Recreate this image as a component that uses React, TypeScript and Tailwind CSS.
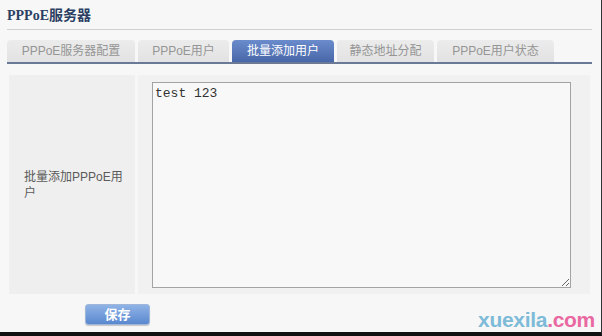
const tabs = ['PPPoE服务器配置', 'PPPoE用户', '批量添加用户', '静态地址分配', 'PPPoE用户状态']
const tabWidths = ['w-[128px]', 'w-[91px]', 'w-[102px]', 'w-[97px]', 'w-[117px]']

export default function App() {
  return (
    <div className="relative w-[602px] h-[336px] bg-[#f7f7f7] border-r border-[#333] border-b-[4px] border-b-[#111] overflow-hidden font-['Liberation_Sans','Noto_Sans_CJK_SC',sans-serif]">
      {/* Header */}
      <div className="pl-[7px] pt-[7px] h-[29px] text-[14px] leading-[17px] font-bold text-[#2b3f63] font-['Liberation_Serif','Noto_Sans_CJK_SC',serif]">
        PPPoE服务器
      </div>
      <div className="ml-[7px] w-[585px] h-px bg-[#cfcfcf]" />

      {/* Tabs */}
      <div className="ml-[7px] w-[585px] mt-[10px] flex items-end gap-[3px] border-b-[2px] border-[#6b7896]">
        {tabs.map((t, i) => (
          <div
            key={t}
            className={`${tabWidths[i]} ${i === 2 ? 'h-[22px] bg-gradient-to-b from-[#6b8ccc] to-[#4867a8] text-white' : 'h-[22px] bg-gradient-to-b from-[#ececec] to-[#e2e2e2] text-[#959595]'} rounded-t-[4px] flex items-center justify-center text-[12px]`}
          >
            {t}
          </div>
        ))}
      </div>

      {/* Form panel */}
      <div className="ml-[9px] mt-[11px] w-[581px] h-[219px] flex gap-[3px]">
        <div className="w-[126px] bg-[#efefef] flex items-center pl-[15px] pr-[10px] text-[12px] leading-[16px] text-[#5a5a5a]">
          批量添加PPPoE用户
        </div>
        <div className="flex-1 bg-[#f1f1f1] pl-[14px] pt-[7px]">
          <textarea
            defaultValue="test 123"
            className="block w-[419px] h-[206px] bg-[#f8f8f8] border border-[#a3a3a3] px-[2px] py-[3px] text-[13px] leading-[15px] text-[#333] font-['Liberation_Mono',monospace] outline-none resize"
          />
        </div>
      </div>

      {/* Save */}
      <div className="ml-[85px] mt-[10px] w-[65px] h-[21px] rounded-[3px] border border-[#9fb6d8] bg-gradient-to-b from-[#8fb3e6] to-[#5a88cf] flex items-center justify-center text-white text-[13px] font-bold shadow-[0_1px_1px_rgba(0,0,0,0.2)]">
        保存
      </div>

      {/* Watermark */}
      <div className="absolute right-[6px] bottom-[1px] text-[21px] leading-[22px] font-bold tracking-[-0.3px] font-['Liberation_Sans',sans-serif]">
        <span className="text-[#7dbbd9]">xuexila</span>
        <span className="text-[#ea68a2]">.com</span>
      </div>
    </div>
  )
}
